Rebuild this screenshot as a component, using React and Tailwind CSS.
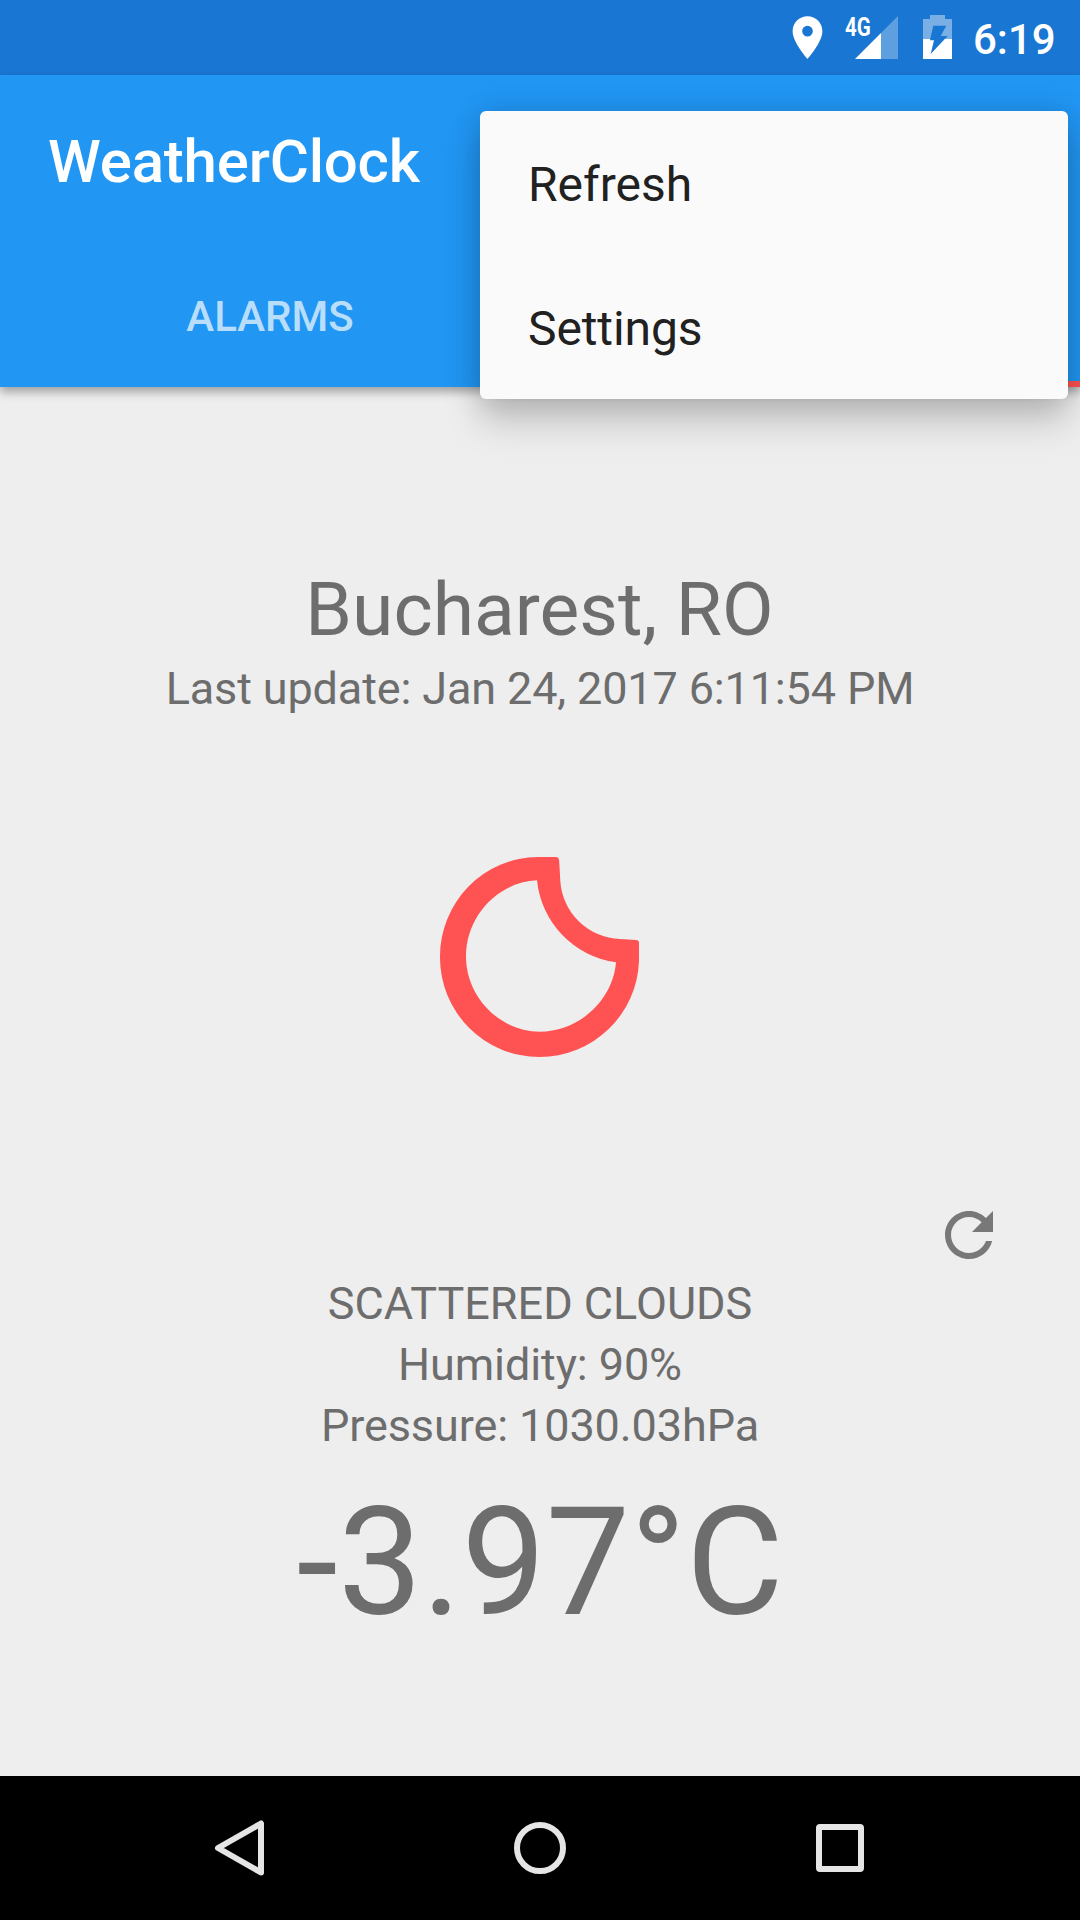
function PinIcon() {
  return (
    <svg className="h-[51px] w-[51px]" viewBox="0 0 24 24" fill="#fff">
      <path d="M12 2C8.13 2 5 5.13 5 9c0 5.25 7 13 7 13s7-7.75 7-13c0-3.87-3.13-7-7-7zm0 9.5a2.5 2.5 0 1 1 0-5 2.5 2.5 0 0 1 0 5z" />
    </svg>
  );
}

function SignalIcon() {
  return (
    <svg className="h-[43px] w-[43px]" viewBox="0 0 43 43" fill="#fff">
      <path d="M26 17L43 0v43H26z" opacity="0.3" />
      <path d="M0 43L26 17v26z" />
    </svg>
  );
}

function BatteryIcon() {
  return (
    <svg className="h-[44px] w-[29px]" viewBox="0 0 29 44" fill="#fff">
      <path d="M7 0h15v4h7v20H21.800L24.700 21H17.700L23.300 10.700H10.300L7.200 24H0V4h7z" opacity="0.42" />
      <path d="M0 24h7.200L7 25.200H11L7.700 39 21.800 24H29v20H0z" />
    </svg>
  );
}

function StatusBar() {
  return (
    <div className="flex h-[75px] bg-[#1976d2] text-white">
      <div className="ml-[782px] mt-[12px]">
        <PinIcon />
      </div>
      <div className="relative ml-[22px] mt-[16px]">
        <SignalIcon />
        <span className="absolute -left-[10px] -top-px origin-left scale-x-[0.79] text-[26px] font-bold leading-[24px]">
          4G
        </span>
      </div>
      <div className="ml-[25px] mt-[15px]">
        <BatteryIcon />
      </div>
      <div className="ml-[21px] mt-[15px] text-[42px] font-medium leading-[49px]">6:19</div>
    </div>
  );
}

function AppBar() {
  return (
    <header className="relative h-[312px] bg-[#2196f3] text-white shadow-[0_5px_9px_rgba(0,0,0,0.32)]">
      <div className="flex h-[168px] items-center pl-[48px] pt-[6px] text-[60px] font-medium tracking-[-0.2px]">
        WeatherClock
      </div>
      <div className="grid h-[144px] grid-cols-2">
        <div className="flex items-center justify-center pt-[2px] text-[42px] font-medium text-white/70">ALARMS</div>
        <div className="border-b-[6px] border-[#ff5252]" />
      </div>
      <nav className="absolute left-[480px] top-[36px] z-10 h-[288px] w-[588px] rounded-[6px] bg-[#fafafa] text-[48px] text-[#212121] shadow-[0_24px_36px_rgba(0,0,0,0.17),0_2px_30px_rgba(0,0,0,0.16)]">
        <div className="flex h-[144px] items-center pl-[48px] pt-[4px]">Refresh</div>
        <div className="flex h-[144px] items-center pl-[48px] pt-[4px] tracking-[-0.1px]">Settings</div>
      </nav>
    </header>
  );
}

function MoonIcon() {
  return (
    <svg className="h-[200px] w-[199px]" viewBox="0 0 199 200" fill="#ff5252">
      <path
        fillRule="evenodd"
        d="M98 0H115.500Q119 0 119.200 4L120.300 24A62 62 0 0 0 180 82L196 83Q199 83.300 199 86V104A99.500 99.500 0 0 1 99.500 200A99.500 99.500 0 0 1 0 100A98.500 99.500 0 0 1 98 0ZM97 23.300C58 25 26 59 26 99.500C26 140 60 174.700 100 174.700C139 174.700 173 143 176 105.300A92 92 0 0 1 97 23.300Z"
      />
    </svg>
  );
}

function RefreshIcon() {
  return (
    <svg className="h-[72px] w-[72px]" viewBox="0 0 24 24" fill="#787878">
      <path d="M17.65 6.35C16.2 4.9 14.21 4 12 4c-4.42 0-7.99 3.58-7.99 8s3.57 8 7.99 8c3.73 0 6.84-2.55 7.730-6h-2.080c-.82 2.330-3.040 4-5.650 4-3.310 0-6-2.690-6-6s2.690-6 6-6c1.660 0 3.140.69 4.220 1.780L13 11h7V4l-2.350 2.350z" />
    </svg>
  );
}

function WeatherPanel() {
  return (
    <main className="flex h-[1389px] flex-col items-center bg-[#eeeeee] text-[45px] leading-[61px] text-[#6d6d6d]">
      <h1 className="mt-[178px] pr-px text-[75px] leading-[88px]">Bucharest, RO</h1>
      <p className="mt-[5px] tracking-[-0.14px]">Last update: Jan 24, 2017 6:11:54 PM</p>
      <div className="mr-[2px] mt-[138px]">
        <MoonIcon />
      </div>
      <button className="mr-[75px] mt-[142px] self-end">
        <RefreshIcon />
      </button>
      <p className="mt-[2px]">SCATTERED CLOUDS</p>
      <p className="tracking-[-0.1px]">Humidity: 90%</p>
      <p className="tracking-[-0.1px]">Pressure: 1030.03hPa</p>
      <p className="mt-[19px] text-[150px] leading-[176px] tracking-[-0.1px]">-3.97°C</p>
    </main>
  );
}

function NavBar() {
  return (
    <footer className="flex h-[144px] items-center justify-center gap-[250px] bg-black pr-[2px]">
      <svg className="h-[56px] w-[50px]" viewBox="0 0 50 56" fill="none" stroke="#e5e5e5" strokeWidth="6" strokeLinejoin="round">
        <path d="M47 3.500V52.500L4 28z" />
      </svg>
      <div className="h-[52px] w-[52px] rounded-full border-[6px] border-[#e5e5e5]" />
      <div className="h-[48px] w-[48px] rounded-[4px] border-[6px] border-[#e5e5e5]" />
    </footer>
  );
}

export default function App() {
  return (
    <div className="h-[1920px] w-[1080px] overflow-hidden font-[Roboto,sans-serif]">
      <StatusBar />
      <AppBar />
      <WeatherPanel />
      <NavBar />
    </div>
  );
}
